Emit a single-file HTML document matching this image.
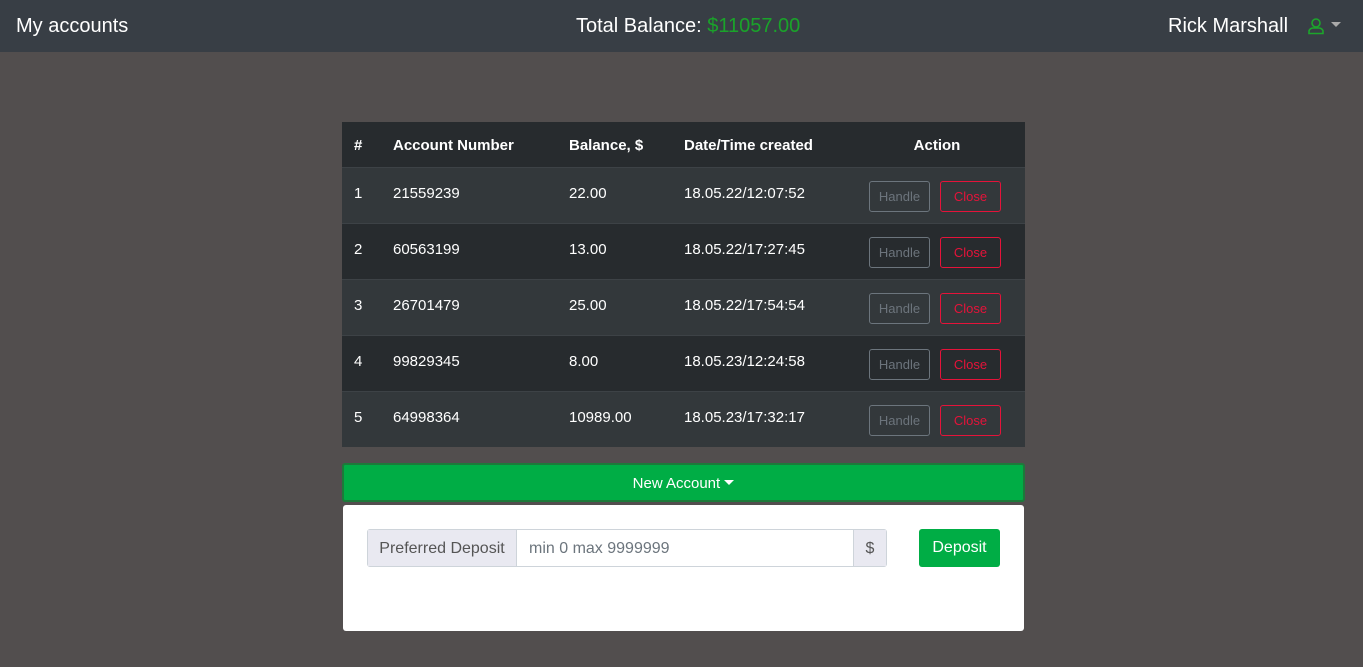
<!DOCTYPE html>
<html><head><style>
*{box-sizing:border-box;margin:0;padding:0}
body{width:1363px;height:667px;background:#524e4e;font-family:"Liberation Sans",sans-serif;position:relative;overflow:hidden}
.nav{position:absolute;left:0;top:0;width:1363px;height:52px;background:#383e45;color:#fff;font-size:20px}
.nav span{position:absolute;top:15px}
table{position:absolute;left:342px;top:122px;width:683px;border-collapse:collapse;color:#fff;font-size:15px}
th{height:45px;background:#272b2e;text-align:left;font-weight:bold;padding-left:12px;padding-top:3px}
td{height:56px;padding-left:12px;border-top:1px solid #3d4246;padding-bottom:3px}
tr:nth-child(even) td{background:#33383b}
tr:nth-child(odd) td{background:#272b2e}
.b{display:inline-block;position:relative;top:3px;width:61px;text-align:center;height:31px;line-height:29px;border-radius:3px;font-size:13px;border:1px solid}
.h{color:#6c747c;border-color:#6c757d}
.c{color:#e5133a;border-color:#e5133a;margin-left:10px}
.na{position:absolute;left:342px;top:463px;width:683px;height:39px;background:#00ad45;border:2px solid #1c7a3a;border-radius:3px;color:#fff;font-size:15px;text-align:center;line-height:37px}
.card{position:absolute;left:343px;top:505px;width:681px;height:126px;background:#fff;border-radius:3px}
.ig{position:absolute;left:24px;top:24px;height:38px;width:520px;border:1px solid #ced4da;border-radius:3px;display:flex;font-size:16px;color:#555}
.ig div{line-height:37px}
</style></head><body>
<div class="nav"><span style="left:16px">My accounts</span><span style="left:576px">Total Balance: <span style="position:static;color:#1aa32a">$11057.00</span></span><span style="left:1168px">Rick Marshall</span>
<svg style="position:absolute;left:1307px;top:17px" width="18" height="18" viewBox="0 0 18 18" fill="none" stroke="#1ca62b" stroke-width="1.6"><circle cx="9" cy="6" r="4"/><path d="M2 16.5v-2c0-2 2-3.5 4-3.5h6c2 0 4 1.5 4 3.5v2z"/></svg>
<svg style="position:absolute;left:1331px;top:22px" width="10" height="6"><path d="M0 0h10L5 5z" fill="#aaa"/></svg></div>
<table>
<tr><th style="width:39px">#</th><th style="width:176px">Account Number</th><th style="width:115px">Balance, $</th><th style="width:177px">Date/Time created</th><th style="text-align:center;padding-left:0">Action</th></tr>
<tr><td>1</td><td>21559239</td><td>22.00</td><td>18.05.22/12:07:52</td><td style="padding-left:20px"><span class="b h">Handle</span><span class="b c">Close</span></td></tr>
<tr><td>2</td><td>60563199</td><td>13.00</td><td>18.05.22/17:27:45</td><td style="padding-left:20px"><span class="b h">Handle</span><span class="b c">Close</span></td></tr>
<tr><td>3</td><td>26701479</td><td>25.00</td><td>18.05.22/17:54:54</td><td style="padding-left:20px"><span class="b h">Handle</span><span class="b c">Close</span></td></tr>
<tr><td>4</td><td>99829345</td><td>8.00</td><td>18.05.23/12:24:58</td><td style="padding-left:20px"><span class="b h">Handle</span><span class="b c">Close</span></td></tr>
<tr><td>5</td><td>64998364</td><td>10989.00</td><td>18.05.23/17:32:17</td><td style="padding-left:20px"><span class="b h">Handle</span><span class="b c">Close</span></td></tr>
</table>
<div class="na">New Account <svg width="10" height="6" style="vertical-align:2px"><path d="M0 0h10L5 5z" fill="#fff"/></svg></div>
<div class="card">
<div class="ig"><div style="background:#e9e9f1;width:149px;text-align:center;border-right:1px solid #ced4da">Preferred Deposit</div><div style="flex:1;padding-left:12px;color:#6c757d">min 0 max 9999999</div><div style="background:#e9e9f1;width:33px;text-align:center;border-left:1px solid #ced4da">$</div></div>
<div style="position:absolute;left:576px;top:24px;width:81px;height:38px;background:#00ad45;border-radius:3px;color:#fff;font-size:16px;text-align:center;line-height:38px">Deposit</div>
</div>
</body></html>
